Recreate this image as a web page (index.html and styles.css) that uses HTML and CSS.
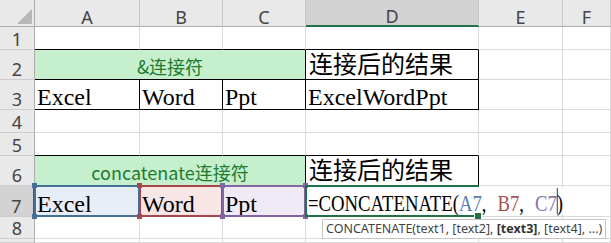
FILE: index.html
```html
<!DOCTYPE html>
<html lang="zh-CN">
<head>
    <meta charset="UTF-8">
    <title>连接符</title>
    <link rel="stylesheet" href="styles.css">
</head>
<body>
    <div class="sheet">
        <div class="hd corner"></div>
        <div class="hd col">A</div>
        <div class="hd col">B</div>
        <div class="hd col">C</div>
        <div class="hd col on">D</div>
        <div class="hd col">E</div>
        <div class="hd col">F</div>

        <div class="hd row">1</div>
        <div class="c edge-b"></div>
        <div class="c edge-b"></div>
        <div class="c edge-b"></div>
        <div class="c edge-b"></div>
        <div class="c"></div>
        <div class="c"></div>

        <div class="hd row">2</div>
        <div class="c tag boxed">&amp;连接符</div>
        <div class="c cjk boxed">连接后的结果</div>
        <div class="c"></div>
        <div class="c"></div>

        <div class="hd row">3</div>
        <div class="c txt boxed">Excel</div>
        <div class="c txt boxed">Word</div>
        <div class="c txt boxed">Ppt</div>
        <div class="c txt boxed">ExcelWordPpt</div>
        <div class="c"></div>
        <div class="c"></div>

        <div class="hd row">4</div>
        <div class="c"></div>
        <div class="c"></div>
        <div class="c"></div>
        <div class="c"></div>
        <div class="c"></div>
        <div class="c"></div>

        <div class="hd row">5</div>
        <div class="c edge-b"></div>
        <div class="c edge-b"></div>
        <div class="c edge-b"></div>
        <div class="c edge-b"></div>
        <div class="c"></div>
        <div class="c"></div>

        <div class="hd row">6</div>
        <div class="c tag boxed">concatenate连接符</div>
        <div class="c cjk boxed">连接后的结果</div>
        <div class="c"></div>
        <div class="c"></div>

        <div class="hd row on">7</div>
        <div class="c txt ref ref-a">Excel</div>
        <div class="c txt ref ref-b">Word</div>
        <div class="c txt ref ref-c">Ppt</div>
        <div class="c txt edit"><span class="formula">=CONCATENATE(<span class="arg-a">A7</span>, <span class="arg-b">B7</span>, <span class="arg-c">C7</span><i class="caret"></i>)</span></div>
        <div class="c"></div>
        <div class="c"></div>

        <div class="hd row">8</div>
        <div class="c"></div>
        <div class="c"></div>
        <div class="c"></div>
        <div class="c"></div>
        <div class="c"></div>
        <div class="c"></div>

        <div class="hd row"></div>
        <div class="c"></div>
        <div class="c"></div>
        <div class="c"></div>
        <div class="c"></div>
        <div class="c"></div>
        <div class="c"></div>

        <div class="tip">CONCATENATE(text1, [text2], <b>[text3]</b>, [text4], ...)</div>
    </div>
</body>
</html>
```

FILE: styles.css
```css
* {
    box-sizing: border-box;
}

body {
    margin: 0;
    background: #fff;
    overflow: hidden;
}

.sheet {
    position: relative;
    display: grid;
    grid-template-columns: 35px 105px 83px 83px 173px 84px 1fr;
    grid-template-rows: 27px 23px 30px 30px 23px 23px 30px 31px 22px 1fr;
    width: 611px;
    height: 243px;
    overflow: hidden;
}

/* headers */
.hd {
    display: flex;
    justify-content: center;
    align-items: flex-end;
    background: #e9e9e9;
    color: #444;
    font: 18px/18px "Noto Sans", sans-serif;
}

.col {
    border-right: 1px solid #c9c9c9;
    border-bottom: 1px solid #ababab;
}

.row {
    border-right: 1px solid #ababab;
    border-bottom: 1px solid #cdcdcd;
    padding-bottom: 1px;
}

.hd.on {
    background: #d3d3d3;
}

.col.on {
    border-bottom: 2px solid #217346;
}

.row.on {
    border-right: 2px solid #217346;
}

.corner {
    position: relative;
    border-right: 1px solid #ababab;
    border-bottom: 1px solid #ababab;
}

.corner::after {
    content: "";
    position: absolute;
    right: 2px;
    bottom: 2px;
    width: 15px;
    height: 15px;
    background: #b7b7b7;
    clip-path: polygon(100% 0, 100% 100%, 0 100%);
}

/* cells */
.c {
    display: flex;
    align-items: flex-end;
    min-width: 0;
    padding: 0 1px;
    border-right: 1px solid #dadada;
    border-bottom: 1px solid #dadada;
    white-space: nowrap;
    line-height: 20px;
}

.edge-b {
    border-bottom-color: #000;
}

.boxed {
    border-right-color: #000;
    border-bottom-color: #000;
}

.txt {
    padding: 0 1px 2px 2px;
    font-family: "Liberation Serif", "Times New Roman", serif;
    font-size: 24px;
    color: #000;
}

.cjk {
    padding: 0 0 4px 3px;
    font: 24px/24px "Noto Sans CJK SC", sans-serif;
    color: #000;
}

.tag {
    grid-column: span 3;
    justify-content: center;
    padding-bottom: 3px;
    background: #c6efce;
    color: #1e7b30;
    font-family: "Noto Sans CJK SC", sans-serif;
    font-size: 18px;
}

/* range highlights while editing the formula */
.ref {
    position: relative;
    --ink: #44709a;
}

.ref::after {
    content: "";
    position: absolute;
    inset: -1px;
    border: 2px solid var(--ink);
}

.ref::before {
    content: "";
    position: absolute;
    inset: -3px;
    z-index: 1;
    background:
        linear-gradient(var(--ink), var(--ink)) left top / 5px 5px no-repeat,
        linear-gradient(var(--ink), var(--ink)) right top / 5px 5px no-repeat,
        linear-gradient(var(--ink), var(--ink)) left bottom / 5px 5px no-repeat,
        linear-gradient(var(--ink), var(--ink)) right bottom / 5px 5px no-repeat;
}

.ref-a {
    background: #e8eef8;
}

.ref-b {
    --ink: #a8464a;
    background: #f8e6e6;
}

.ref-c {
    --ink: #8065a2;
    background: #efeaf6;
}

/* active cell in edit mode: the text runs on past the right edge */
.edit {
    position: relative;
    z-index: 2;
    overflow: visible;
}

.edit::after {
    content: "";
    position: absolute;
    inset: -1px;
    border: 2px solid #217346;
    border-right: 0;
}

.edit::before {
    content: "";
    position: absolute;
    right: -4px;
    bottom: -4px;
    width: 6px;
    height: 6px;
    background: #217346;
    border: 1px solid #fff;
    z-index: 1;
}

.formula {
    display: inline-block;
    padding-right: 16px;
    background: #fff;
    word-spacing: 8px;
    transform: scaleX(0.78);
    transform-origin: left bottom;
}

.arg-a {
    color: #5a7cae;
}

.arg-b {
    color: #a65252;
}

.arg-c {
    color: #8574a9;
}

.caret {
    display: inline-block;
    width: 1.4px;
    height: 26px;
    margin-right: -1.4px;
    vertical-align: -3px;
    background: #000;
}

/* function argument hint */
.tip {
    position: absolute;
    left: 322px;
    top: 219px;
    z-index: 3;
    height: 20px;
    padding: 0 3px;
    background: #fff;
    border: 1px solid #c4c4c4;
    color: #444;
    font: 12.5px/18px "Noto Sans", sans-serif;
    white-space: nowrap;
}

.tip b {
    color: #333;
}
```
